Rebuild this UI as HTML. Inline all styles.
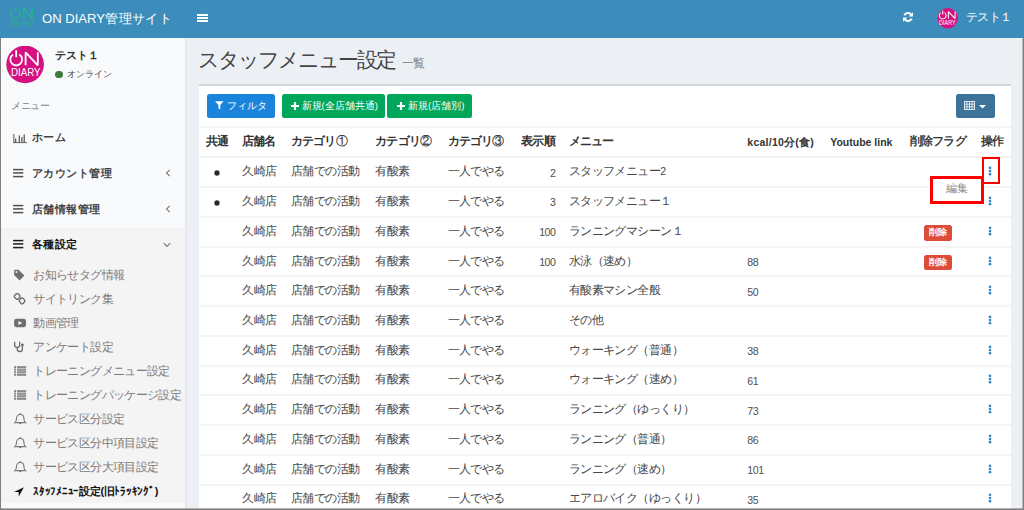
<!DOCTYPE html>
<html lang="ja"><head><meta charset="utf-8">
<style>
*{box-sizing:border-box;margin:0;padding:0}
html,body{width:1024px;height:510px;overflow:hidden;background:#ecf0f5;font-family:"Liberation Sans",sans-serif}
.a{position:absolute;white-space:nowrap}
#hdr{position:absolute;left:0;top:0;width:1024px;height:37.8px;background:#3c8dbc;z-index:2}
#side{position:absolute;left:0;top:37px;width:187.2px;height:480px;background:#f9fafc;border-right:2.2px solid #e6e8ed}
.mi{position:absolute;left:0;width:184px;height:0;font-size:11px;letter-spacing:0.5px;color:#444;font-weight:bold}
.mi span{line-height:20px;top:-10px}
.si{font-size:12px;letter-spacing:-0.64px;line-height:24px;color:#7a7a7a}
.act{font-size:11px;letter-spacing:-0.3px;line-height:24px;color:#111;font-weight:bold}
#box{position:absolute;left:198.6px;top:83.7px;width:812.4px;height:440px;background:#fff;border-top:2px solid #d2d6de}
.btn{position:absolute;top:94.3px;height:23.8px;border-radius:2.5px;color:#fff;font-size:9.6px;line-height:23.8px}
.th{font-size:12px;letter-spacing:-0.8px;font-weight:bold;color:#333;line-height:20px;margin-top:-10.4px}
.th.nb{font-weight:normal;color:#222;-webkit-text-stroke:0.3px #222}
.th.lat{font-size:10.5px;letter-spacing:0;margin-top:-9.3px}
.td{font-size:12px;letter-spacing:-0.55px;line-height:20px;margin-top:-10.5px;color:#484848}
.num{font-size:10.6px;letter-spacing:-0.45px;line-height:20px;margin-top:-9.2px;color:#505050}
.hl{position:absolute;left:198.6px;width:812.4px;height:2px;background:#f5f5f5}
.hl.hb{background:#f2f2f2}
.bul{width:4.8px;height:4.8px;border-radius:50%;background:#333}
.dots{width:3px;height:10px}
.dots i{display:block;width:2.5px;height:2.5px;border-radius:50%;background:#3c8dbc;margin-bottom:0.8px}
.badge{width:27.7px;height:15.5px;background:#dd4b39;border-radius:2.5px;color:#fff;font-size:9px;font-weight:bold;line-height:15.5px;text-align:center}
.bd{position:absolute;background:#7f7f7f}

</style></head><body>
<div id="hdr">
  <svg class="a" style="left:8px;top:4px" width="28" height="26" viewBox="0 0 28 26">
    <g fill="none" stroke="#26b48c" stroke-width="1.45" stroke-linejoin="bevel">
      <path d="M5.05 5.56 A5 5 0 1 0 10.35 5.56"/>
      <path d="M7.7 2.3 V7.9"/>
      <path d="M15.8 14.8 V3.8 L24.1 14.8 V3.8"/>
    </g>
    <text x="2.3" y="23.2" font-family="Liberation Sans" font-size="8.6" fill="#2aae8e" textLength="22.7" lengthAdjust="spacingAndGlyphs">DIARY</text>
  </svg>
  <div class="a" style="left:42px;top:0.5px;line-height:36px;font-size:13.1px;color:#fff">ON DIARY<span style="letter-spacing:0.45px">管理サイト</span></div>
  <div class="a" style="left:197px;top:13.8px;width:10.5px;height:8.4px">
    <div style="height:1.8px;background:#fff;margin-bottom:1.5px"></div>
    <div style="height:1.8px;background:#fff;margin-bottom:1.5px"></div>
    <div style="height:1.8px;background:#fff"></div>
  </div>
  <svg class="a" style="left:902px;top:10.6px" width="12" height="12" viewBox="0 0 12 12">
    <g fill="none" stroke="#fff" stroke-width="2">
      <path d="M9.6 4.6 A4 4 0 0 0 2.3 4.2"/>
      <path d="M2.4 7.4 A4 4 0 0 0 9.7 7.8"/>
    </g>
    <path d="M11 1.2 V5.6 H6.6 Z" fill="#fff"/>
    <path d="M1 10.8 V6.4 H5.4 Z" fill="#fff"/>
  </svg>
  <svg class="a" style="left:937px;top:8px" width="21" height="21" viewBox="0 0 21 21">
    <circle cx="10.7" cy="10.3" r="10.2" fill="#d5117f"/>
    <g fill="none" stroke="#fff" stroke-width="1.05" stroke-linejoin="bevel">
      <path d="M3.95 4.62 A3.4 3.4 0 1 0 7.55 4.62"/>
      <path d="M5.75 2.6 V6.4"/>
      <path d="M11.4 10.6 V3.6 L18.1 10.6 V3.6"/>
    </g>
    <text x="2.1" y="17.2" font-family="Liberation Sans" font-size="6.8" fill="#fff" textLength="16.5" lengthAdjust="spacingAndGlyphs">DIARY</text>
  </svg>
  <div class="a" style="left:966px;top:-1px;line-height:36px;font-size:12px;letter-spacing:-0.6px;color:#fff">テスト１</div>
</div>

<div id="side">
  <svg class="a" style="left:5.5px;top:9px" width="40" height="38" viewBox="0 0 40 38">
    <circle cx="19.1" cy="18.4" r="18.8" fill="#d5117f"/>
    <g fill="none" stroke="#fff" stroke-width="1.8" stroke-linejoin="bevel">
      <path d="M7.07 8.6 A5.9 5.9 0 1 0 13.33 8.6"/>
      <path d="M10.2 4.2 V11.2"/>
      <path d="M19.6 19.3 V6.3 L31.8 19.3 V6.3"/>
    </g>
    <text x="5" y="30" font-family="Liberation Sans" font-size="10.4" fill="#fff" textLength="29.6" lengthAdjust="spacingAndGlyphs">DIARY</text>
  </svg>
  <div class="a" style="left:55px;top:9px;font-size:11.2px;line-height:18px;font-weight:bold;color:#333">テスト１</div>
  <div class="a" style="left:55.2px;top:33.8px;width:7.6px;height:7.6px;border-radius:50%;background:#3b7a3b"></div>
  <div class="a" style="left:67px;top:29px;font-size:8.8px;line-height:16px;color:#444">オンライン</div>
  <div class="a" style="left:11px;top:61px;font-size:10px;letter-spacing:-0.3px;line-height:16px;color:#7c7c7c">メニュー</div>

  <div style="position:absolute;left:0;top:190.6px;width:185px;height:275.6px;background:#f4f4f5"></div>
  <div class="mi" style="top:100.2px">
    <svg class="a" style="left:12.5px;top:-4.5px" width="15" height="11" viewBox="0 0 15 11"><g fill="#505050"><rect x="0.4" y="0.9" width="0.95" height="9.2"/><rect x="0.4" y="9.2" width="13.5" height="0.9"/><rect x="2.1" y="5.5" width="1.2" height="3.7"/><rect x="5.7" y="2.4" width="1.2" height="6.8"/><rect x="8.3" y="4.0" width="1.2" height="5.2"/><rect x="10.6" y="1.4" width="1.2" height="7.8"/></g></svg>
    <span class="a" style="left:31.8px">ホーム</span>
  </div>
  <div class="mi" style="top:136.2px">
    <svg class="a" style="left:12.5px;top:-5px" width="11" height="10" viewBox="0 0 11 10"><g fill="#505050"><rect x="0.1" y="0.85" width="10.2" height="1.5"/><rect x="0.1" y="4.15" width="10.2" height="1.5"/><rect x="0.1" y="7.85" width="10.2" height="1.5"/></g></svg>
    <span class="a" style="left:31.8px">アカウント管理</span>
    <svg class="a" style="left:164.5px;top:-4px" width="6" height="8" viewBox="0 0 6 8"><path d="M4.8 0.8 L1.5 4 L4.8 7.2" fill="none" stroke="#777" stroke-width="1.1"/></svg>
  </div>
  <div class="mi" style="top:172px">
    <svg class="a" style="left:12.5px;top:-5px" width="11" height="10" viewBox="0 0 11 10"><g fill="#505050"><rect x="0.1" y="0.85" width="10.2" height="1.5"/><rect x="0.1" y="4.15" width="10.2" height="1.5"/><rect x="0.1" y="7.85" width="10.2" height="1.5"/></g></svg>
    <span class="a" style="left:31.8px">店舗情報管理</span>
    <svg class="a" style="left:164.5px;top:-4px" width="6" height="8" viewBox="0 0 6 8"><path d="M4.8 0.8 L1.5 4 L4.8 7.2" fill="none" stroke="#777" stroke-width="1.1"/></svg>
  </div>
  <div class="mi" style="top:207.4px;color:#111">
    <svg class="a" style="left:12.5px;top:-5px" width="11" height="10" viewBox="0 0 11 10"><g fill="#1a1a1a"><rect x="0.1" y="0.85" width="10.2" height="1.5"/><rect x="0.1" y="4.15" width="10.2" height="1.5"/><rect x="0.1" y="7.85" width="10.2" height="1.5"/></g></svg>
    <span class="a" style="left:31.8px">各種設定</span>
    <svg class="a" style="left:163px;top:-2.5px" width="8" height="6" viewBox="0 0 8 6"><path d="M0.8 1.2 L4 4.5 L7.2 1.2" fill="none" stroke="#777" stroke-width="1.1"/></svg>
  </div>
</div>

<div class="a" style="left:197.8px;top:42px;font-size:21px;letter-spacing:-2px;line-height:36px;color:#444">スタッフメニュー設定<span style="font-size:12px;letter-spacing:-0.5px;color:#777;margin-left:7px">一覧</span></div>

<div id="box"></div>
<div class="btn" style="left:206.6px;width:68.7px;background:#1a84dc">
  <svg class="a" style="left:8.3px;top:6.8px" width="9" height="9" viewBox="0 0 9 9"><path d="M0.1 0.3 H8.6 L5.3 4.1 V8.6 L3.4 7.3 V4.1 Z" fill="#fff"/></svg>
  <span class="a" style="left:20.8px;top:0">フィルタ</span>
</div>
<div class="btn" style="left:281.6px;width:103.3px;background:#00a65a">
  <svg class="a" style="left:9px;top:7.5px" width="8" height="8" viewBox="0 0 8 8"><path d="M2.9 0 H5.1 V2.9 H8 V5.1 H5.1 V8 H2.9 V5.1 H0 V2.9 H2.9 Z" fill="#fff"/></svg>
  <span class="a" style="left:20px;top:0">新規(全店舗共通)</span>
</div>
<div class="btn" style="left:387px;width:85px;background:#00a65a">
  <svg class="a" style="left:9.6px;top:7.5px" width="8" height="8" viewBox="0 0 8 8"><path d="M2.9 0 H5.1 V2.9 H8 V5.1 H5.1 V8 H2.9 V5.1 H0 V2.9 H2.9 Z" fill="#fff"/></svg>
  <span class="a" style="left:21px;top:0">新規(店舗別)</span>
</div>
<div class="btn" style="left:956px;width:39px;background:#3d7399">
  <svg class="a" style="left:8px;top:6.4px" width="11" height="9" viewBox="0 0 11 9"><g fill="none" stroke="#fff" stroke-width="0.8"><rect x="0.4" y="0.4" width="10.2" height="8.2"/><path d="M2.95 0.4V8.6M5.5 0.4V8.6M8.05 0.4V8.6M0.4 3.13H10.6M0.4 5.87H10.6"/></g></svg>
  <svg class="a" style="left:23px;top:10.5px" width="7" height="4" viewBox="0 0 7 4"><path d="M0 0 H7 L3.5 3.6 Z" fill="#fff"/></svg>
</div>
<div class="a" style="left:0;top:274.9px;height:0"><svg class="a" style="left:12px;top:-6px" width="15" height="13" viewBox="0 0 15 13"><path d="M2.1 1.7 Q2.1 0.7 3.1 0.7 H6.5 L12.4 6.6 L7.6 11.4 L2.1 5.9 Z" fill="#6e6e6e"/><circle cx="4.4" cy="3" r="0.95" fill="#f4f4f5"/></svg><span class="a si" style="left:33.4px;top:-12px">お知らせタグ情報</span></div>
<div class="a" style="left:0;top:298.9px;height:0"><svg class="a" style="left:12px;top:-6px" width="15" height="13" viewBox="0 0 15 13"><g fill="none" stroke="#6e6e6e" stroke-width="1.35"><rect x="2.7" y="0.9" width="5" height="5" rx="1.7" transform="rotate(45 5.2 3.4)"/><rect x="7.6" y="5.4" width="5" height="5" rx="1.7" transform="rotate(45 10.1 7.9)"/></g></svg><span class="a si" style="left:33.4px;top:-12px">サイトリンク集</span></div>
<div class="a" style="left:0;top:322.9px;height:0"><svg class="a" style="left:12px;top:-6px" width="15" height="13" viewBox="0 0 15 13"><rect x="2.1" y="1.7" width="11.9" height="8.6" rx="2.3" fill="#6e6e6e"/><path d="M6.4 4.1 L10.2 6 L6.4 7.9 Z" fill="#f4f4f5"/></svg><span class="a si" style="left:33.4px;top:-12px">動画管理</span></div>
<div class="a" style="left:0;top:346.9px;height:0"><svg class="a" style="left:12px;top:-6px" width="15" height="13" viewBox="0 0 15 13"><g fill="none" stroke="#6e6e6e" stroke-width="1.3"><path d="M2.7 0.7 V3.9 A2.5 2.5 0 0 0 7.7 3.9 V0.7"/><path d="M5.2 6.4 V7.9 A2.6 2.6 0 0 0 10.4 7.9 V4.6"/></g><circle cx="10.4" cy="3.9" r="1.35" fill="#6e6e6e"/></svg><span class="a si" style="left:33.4px;top:-12px">アンケート設定</span></div>
<div class="a" style="left:0;top:370.9px;height:0"><svg class="a" style="left:12px;top:-6px" width="15" height="13" viewBox="0 0 15 13"><g fill="#c4c4c4"><rect x="2.1" y="1.4" width="12" height="3"/><rect x="2.1" y="7.4" width="12" height="3"/></g><g fill="#6e6e6e"><rect x="2.1" y="1.4" width="2.1" height="1.3"/><rect x="2.1" y="4.3" width="2.1" height="1.3"/><rect x="2.1" y="6.4" width="2.1" height="1.3"/><rect x="2.1" y="9.3" width="2.1" height="1.3"/><rect x="5" y="1.4" width="9.1" height="1.3"/><rect x="5" y="4.3" width="9.1" height="1.3"/><rect x="5" y="6.4" width="9.1" height="1.3"/><rect x="5" y="9.3" width="9.1" height="1.3"/></g><rect x="4.2" y="1.4" width="0.8" height="9.2" fill="#f4f4f5"/></svg><span class="a si" style="left:33.4px;top:-12px">トレーニングメニュー設定</span></div>
<div class="a" style="left:0;top:394.9px;height:0"><svg class="a" style="left:12px;top:-6px" width="15" height="13" viewBox="0 0 15 13"><g fill="#c4c4c4"><rect x="2.1" y="1.4" width="12" height="3"/><rect x="2.1" y="7.4" width="12" height="3"/></g><g fill="#6e6e6e"><rect x="2.1" y="1.4" width="2.1" height="1.3"/><rect x="2.1" y="4.3" width="2.1" height="1.3"/><rect x="2.1" y="6.4" width="2.1" height="1.3"/><rect x="2.1" y="9.3" width="2.1" height="1.3"/><rect x="5" y="1.4" width="9.1" height="1.3"/><rect x="5" y="4.3" width="9.1" height="1.3"/><rect x="5" y="6.4" width="9.1" height="1.3"/><rect x="5" y="9.3" width="9.1" height="1.3"/></g><rect x="4.2" y="1.4" width="0.8" height="9.2" fill="#f4f4f5"/></svg><span class="a si" style="left:33.4px;top:-12px">トレーニングパッケージ設定</span></div>
<div class="a" style="left:0;top:418.9px;height:0"><svg class="a" style="left:12px;top:-6px" width="15" height="13" viewBox="0 0 15 13"><g fill="none" stroke="#777" stroke-width="1.1"><path d="M2.9 9.6 C4 8.6 4.5 7.4 4.5 5.4 C4.5 3 6 1.5 8.2 1.5 C10.4 1.5 11.9 3 11.9 5.4 C11.9 7.4 12.4 8.6 13.5 9.6 Z"/></g><circle cx="8.2" cy="0.9" r="0.8" fill="#777"/><path d="M7 10.1 A1.2 1.2 0 0 0 9.4 10.1 Z" fill="#777"/></svg><span class="a si" style="left:33.4px;top:-12px">サービス区分設定</span></div>
<div class="a" style="left:0;top:442.9px;height:0"><svg class="a" style="left:12px;top:-6px" width="15" height="13" viewBox="0 0 15 13"><g fill="none" stroke="#777" stroke-width="1.1"><path d="M2.9 9.6 C4 8.6 4.5 7.4 4.5 5.4 C4.5 3 6 1.5 8.2 1.5 C10.4 1.5 11.9 3 11.9 5.4 C11.9 7.4 12.4 8.6 13.5 9.6 Z"/></g><circle cx="8.2" cy="0.9" r="0.8" fill="#777"/><path d="M7 10.1 A1.2 1.2 0 0 0 9.4 10.1 Z" fill="#777"/></svg><span class="a si" style="left:33.4px;top:-12px">サービス区分中項目設定</span></div>
<div class="a" style="left:0;top:466.9px;height:0"><svg class="a" style="left:12px;top:-6px" width="15" height="13" viewBox="0 0 15 13"><g fill="none" stroke="#777" stroke-width="1.1"><path d="M2.9 9.6 C4 8.6 4.5 7.4 4.5 5.4 C4.5 3 6 1.5 8.2 1.5 C10.4 1.5 11.9 3 11.9 5.4 C11.9 7.4 12.4 8.6 13.5 9.6 Z"/></g><circle cx="8.2" cy="0.9" r="0.8" fill="#777"/><path d="M7 10.1 A1.2 1.2 0 0 0 9.4 10.1 Z" fill="#777"/></svg><span class="a si" style="left:33.4px;top:-12px">サービス区分大項目設定</span></div>
<div class="a" style="left:0;top:490.9px;height:0"><svg class="a" style="left:12px;top:-6px" width="15" height="13" viewBox="0 0 15 13"><path d="M11.9 2.2 L2 7.1 L6.6 7 L6.8 11.5 Z" fill="#111"/></svg><span class="a act" style="left:33.4px;top:-12px">ｽﾀｯﾌﾒﾆｭｰ設定(旧ﾄﾗｯｷﾝｸﾞ)</span></div>
<div class="hl" style="top:126px"></div>
<span class="a th" style="left:205.9px;top:141.3px">共通</span>
<span class="a th" style="left:242.1px;top:141.3px">店舗名</span>
<span class="a th" style="left:290.8px;top:141.3px">カテゴリ<span style="font-weight:normal;-webkit-text-stroke:0.2px #333">①</span></span>
<span class="a th" style="left:375.2px;top:141.3px">カテゴリ<span style="font-weight:normal;-webkit-text-stroke:0.2px #333">②</span></span>
<span class="a th" style="left:447.6px;top:141.3px">カテゴリ<span style="font-weight:normal;-webkit-text-stroke:0.2px #333">③</span></span>
<span class="a th" style="left:521.2px;top:141.3px">表示順</span>
<span class="a th" style="left:568.7px;top:141.3px">メニュー</span>
<span class="a th lat" style="left:747.3px;top:141.3px;letter-spacing:0.25px">kcal/10分(食)</span>
<span class="a th lat" style="left:830.2px;top:141.3px">Youtube link</span>
<span class="a th nb" style="left:909.8px;top:141.3px">削除フラグ</span>
<span class="a th nb" style="left:981.1px;top:141.3px">操作</span>
<div class="hl hb" style="top:156px"></div>
<svg class="a" style="left:213.9px;top:170.0px" width="6" height="6" viewBox="0 0 6 6"><circle cx="3" cy="3" r="2.65" fill="#2a2a2a"/></svg>
<span class="a td" style="left:242.1px;top:171.8px">久崎店</span>
<span class="a td" style="left:290.8px;top:171.8px">店舗での活動</span>
<span class="a td" style="left:375.2px;top:171.8px">有酸素</span>
<span class="a td" style="left:447.6px;top:171.8px">一人でやる</span>
<span class="a num" style="right:468.5px;top:171.8px">2</span>
<span class="a td" style="left:568.7px;top:171.8px">スタッフメニュー<span style="font-size:10.6px;letter-spacing:0">2</span></span>
<svg class="a" style="left:988.4px;top:166.3px" width="4" height="11" viewBox="0 0 4 11"><g fill="#3a8ac4"><circle cx="2" cy="1.9" r="1.35"/><circle cx="2" cy="5.05" r="1.35"/><circle cx="2" cy="8.2" r="1.35"/></g></svg>
<div class="hl" style="top:186px"></div>
<svg class="a" style="left:213.9px;top:199.7px" width="6" height="6" viewBox="0 0 6 6"><circle cx="3" cy="3" r="2.65" fill="#2a2a2a"/></svg>
<span class="a td" style="left:242.1px;top:201.5px">久崎店</span>
<span class="a td" style="left:290.8px;top:201.5px">店舗での活動</span>
<span class="a td" style="left:375.2px;top:201.5px">有酸素</span>
<span class="a td" style="left:447.6px;top:201.5px">一人でやる</span>
<span class="a num" style="right:468.5px;top:201.5px">3</span>
<span class="a td" style="left:568.7px;top:201.5px">スタッフメニュー１</span>
<svg class="a" style="left:988.4px;top:196.0px" width="4" height="11" viewBox="0 0 4 11"><g fill="#3a8ac4"><circle cx="2" cy="1.9" r="1.35"/><circle cx="2" cy="5.05" r="1.35"/><circle cx="2" cy="8.2" r="1.35"/></g></svg>
<div class="hl" style="top:216px"></div>
<span class="a td" style="left:242.1px;top:231.2px">久崎店</span>
<span class="a td" style="left:290.8px;top:231.2px">店舗での活動</span>
<span class="a td" style="left:375.2px;top:231.2px">有酸素</span>
<span class="a td" style="left:447.6px;top:231.2px">一人でやる</span>
<span class="a num" style="right:468.5px;top:231.2px">100</span>
<span class="a td" style="left:568.7px;top:231.2px">ランニングマシーン１</span>
<div class="a badge" style="left:924.4px;top:225.1px">削除</div>
<svg class="a" style="left:988.4px;top:225.7px" width="4" height="11" viewBox="0 0 4 11"><g fill="#3a8ac4"><circle cx="2" cy="1.9" r="1.35"/><circle cx="2" cy="5.05" r="1.35"/><circle cx="2" cy="8.2" r="1.35"/></g></svg>
<div class="hl" style="top:246px"></div>
<span class="a td" style="left:242.1px;top:261.0px">久崎店</span>
<span class="a td" style="left:290.8px;top:261.0px">店舗での活動</span>
<span class="a td" style="left:375.2px;top:261.0px">有酸素</span>
<span class="a td" style="left:447.6px;top:261.0px">一人でやる</span>
<span class="a num" style="right:468.5px;top:261.0px">100</span>
<span class="a td" style="left:568.7px;top:261.0px">水泳（速め）</span>
<span class="a num" style="left:747.3px;top:261.0px">88</span>
<div class="a badge" style="left:924.4px;top:254.9px">削除</div>
<svg class="a" style="left:988.4px;top:255.5px" width="4" height="11" viewBox="0 0 4 11"><g fill="#3a8ac4"><circle cx="2" cy="1.9" r="1.35"/><circle cx="2" cy="5.05" r="1.35"/><circle cx="2" cy="8.2" r="1.35"/></g></svg>
<div class="hl" style="top:275px"></div>
<span class="a td" style="left:242.1px;top:290.7px">久崎店</span>
<span class="a td" style="left:290.8px;top:290.7px">店舗での活動</span>
<span class="a td" style="left:375.2px;top:290.7px">有酸素</span>
<span class="a td" style="left:447.6px;top:290.7px">一人でやる</span>
<span class="a td" style="left:568.7px;top:290.7px">有酸素マシン全般</span>
<span class="a num" style="left:747.3px;top:290.7px">50</span>
<svg class="a" style="left:988.4px;top:285.2px" width="4" height="11" viewBox="0 0 4 11"><g fill="#3a8ac4"><circle cx="2" cy="1.9" r="1.35"/><circle cx="2" cy="5.05" r="1.35"/><circle cx="2" cy="8.2" r="1.35"/></g></svg>
<div class="hl" style="top:305px"></div>
<span class="a td" style="left:242.1px;top:320.5px">久崎店</span>
<span class="a td" style="left:290.8px;top:320.5px">店舗での活動</span>
<span class="a td" style="left:375.2px;top:320.5px">有酸素</span>
<span class="a td" style="left:447.6px;top:320.5px">一人でやる</span>
<span class="a td" style="left:568.7px;top:320.5px">その他</span>
<svg class="a" style="left:988.4px;top:315.0px" width="4" height="11" viewBox="0 0 4 11"><g fill="#3a8ac4"><circle cx="2" cy="1.9" r="1.35"/><circle cx="2" cy="5.05" r="1.35"/><circle cx="2" cy="8.2" r="1.35"/></g></svg>
<div class="hl" style="top:335px"></div>
<span class="a td" style="left:242.1px;top:350.2px">久崎店</span>
<span class="a td" style="left:290.8px;top:350.2px">店舗での活動</span>
<span class="a td" style="left:375.2px;top:350.2px">有酸素</span>
<span class="a td" style="left:447.6px;top:350.2px">一人でやる</span>
<span class="a td" style="left:568.7px;top:350.2px">ウォーキング（普通）</span>
<span class="a num" style="left:747.3px;top:350.2px">38</span>
<svg class="a" style="left:988.4px;top:344.7px" width="4" height="11" viewBox="0 0 4 11"><g fill="#3a8ac4"><circle cx="2" cy="1.9" r="1.35"/><circle cx="2" cy="5.05" r="1.35"/><circle cx="2" cy="8.2" r="1.35"/></g></svg>
<div class="hl" style="top:365px"></div>
<span class="a td" style="left:242.1px;top:379.9px">久崎店</span>
<span class="a td" style="left:290.8px;top:379.9px">店舗での活動</span>
<span class="a td" style="left:375.2px;top:379.9px">有酸素</span>
<span class="a td" style="left:447.6px;top:379.9px">一人でやる</span>
<span class="a td" style="left:568.7px;top:379.9px">ウォーキング（速め）</span>
<span class="a num" style="left:747.3px;top:379.9px">61</span>
<svg class="a" style="left:988.4px;top:374.4px" width="4" height="11" viewBox="0 0 4 11"><g fill="#3a8ac4"><circle cx="2" cy="1.9" r="1.35"/><circle cx="2" cy="5.05" r="1.35"/><circle cx="2" cy="8.2" r="1.35"/></g></svg>
<div class="hl" style="top:394px"></div>
<span class="a td" style="left:242.1px;top:409.7px">久崎店</span>
<span class="a td" style="left:290.8px;top:409.7px">店舗での活動</span>
<span class="a td" style="left:375.2px;top:409.7px">有酸素</span>
<span class="a td" style="left:447.6px;top:409.7px">一人でやる</span>
<span class="a td" style="left:568.7px;top:409.7px">ランニング（ゆっくり）</span>
<span class="a num" style="left:747.3px;top:409.7px">73</span>
<svg class="a" style="left:988.4px;top:404.2px" width="4" height="11" viewBox="0 0 4 11"><g fill="#3a8ac4"><circle cx="2" cy="1.9" r="1.35"/><circle cx="2" cy="5.05" r="1.35"/><circle cx="2" cy="8.2" r="1.35"/></g></svg>
<div class="hl" style="top:424px"></div>
<span class="a td" style="left:242.1px;top:439.4px">久崎店</span>
<span class="a td" style="left:290.8px;top:439.4px">店舗での活動</span>
<span class="a td" style="left:375.2px;top:439.4px">有酸素</span>
<span class="a td" style="left:447.6px;top:439.4px">一人でやる</span>
<span class="a td" style="left:568.7px;top:439.4px">ランニング（普通）</span>
<span class="a num" style="left:747.3px;top:439.4px">86</span>
<svg class="a" style="left:988.4px;top:433.9px" width="4" height="11" viewBox="0 0 4 11"><g fill="#3a8ac4"><circle cx="2" cy="1.9" r="1.35"/><circle cx="2" cy="5.05" r="1.35"/><circle cx="2" cy="8.2" r="1.35"/></g></svg>
<div class="hl" style="top:454px"></div>
<span class="a td" style="left:242.1px;top:469.2px">久崎店</span>
<span class="a td" style="left:290.8px;top:469.2px">店舗での活動</span>
<span class="a td" style="left:375.2px;top:469.2px">有酸素</span>
<span class="a td" style="left:447.6px;top:469.2px">一人でやる</span>
<span class="a td" style="left:568.7px;top:469.2px">ランニング（速め）</span>
<span class="a num" style="left:747.3px;top:469.2px">101</span>
<svg class="a" style="left:988.4px;top:463.7px" width="4" height="11" viewBox="0 0 4 11"><g fill="#3a8ac4"><circle cx="2" cy="1.9" r="1.35"/><circle cx="2" cy="5.05" r="1.35"/><circle cx="2" cy="8.2" r="1.35"/></g></svg>
<div class="hl" style="top:484px"></div>
<span class="a td" style="left:242.1px;top:498.9px">久崎店</span>
<span class="a td" style="left:290.8px;top:498.9px">店舗での活動</span>
<span class="a td" style="left:375.2px;top:498.9px">有酸素</span>
<span class="a td" style="left:447.6px;top:498.9px">一人でやる</span>
<span class="a td" style="left:568.7px;top:498.9px">エアロバイク（ゆっくり）</span>
<span class="a num" style="left:747.3px;top:498.9px">35</span>
<svg class="a" style="left:988.4px;top:493.4px" width="4" height="11" viewBox="0 0 4 11"><g fill="#3a8ac4"><circle cx="2" cy="1.9" r="1.35"/><circle cx="2" cy="5.05" r="1.35"/><circle cx="2" cy="8.2" r="1.35"/></g></svg>
<div class="a" style="left:930px;top:176px;width:54px;height:27.6px;background:#fff;border:3px solid #fe0000"></div>
<span class="a" style="left:946.3px;top:188px;font-size:11px;letter-spacing:-0.4px;line-height:20px;margin-top:-10.5px;color:#8a8a8a">編集</span>
<div class="a" style="left:981.5px;top:157px;width:18.2px;height:26.8px;border:2.8px solid #fe0000"></div>
<div class="bd" style="left:0;top:0;width:1024px;height:1px"></div>
<div class="bd" style="left:0;top:0;width:1px;height:510px"></div>
<div class="bd" style="left:1023px;top:0;width:1px;height:510px"></div><div class="a" style="left:1022px;top:0;width:1px;height:508px;background:rgba(127,127,127,0.45)"></div>
<div class="bd" style="left:0;top:509px;width:1024px;height:1px"></div><div class="a" style="left:0;top:508px;width:1024px;height:1px;background:rgba(127,127,127,0.6)"></div>
</body></html>
